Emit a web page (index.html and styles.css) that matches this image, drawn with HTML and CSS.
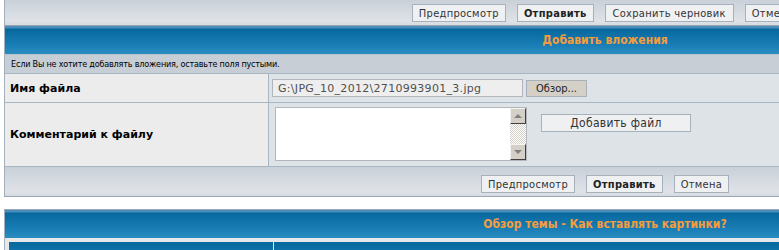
FILE: index.html
```html
<!DOCTYPE html>
<html lang="ru">
<head>
  <meta charset="UTF-8">
  <title>Добавить вложения</title>
  <link rel="stylesheet" href="styles.css">
</head>
<body>
  <div class="panel">
    <div class="bar bar-top">
      <button type="button" class="btn">Предпросмотр</button>
      <button type="button" class="btn btn-main">Отправить</button>
      <button type="button" class="btn btn-draft">Сохранить черновик</button>
      <button type="button" class="btn">Отмена</button>
    </div>
    <div class="cat-head">Добавить вложения</div>
    <div class="info">Если Вы не хотите добавлять вложения, оставьте поля пустыми.</div>
    <div class="row row-file">
      <div class="label">Имя файла</div>
      <div class="field">
        <input type="text" class="file-input" value="G:\JPG_10_2012\2710993901_3.jpg">
        <button type="button" class="browse">Обзор...</button>
      </div>
    </div>
    <div class="row row-comment">
      <div class="label">Комментарий к файлу</div>
      <div class="field">
        <div class="textbox">
          <textarea name="filecomment"></textarea>
          <div class="scroll">
            <span class="arrow arrow-up"></span>
            <span class="track"></span>
            <span class="arrow arrow-down"></span>
          </div>
        </div>
        <button type="button" class="btn btn-wide">Добавить файл</button>
      </div>
    </div>
    <div class="bar bar-bottom">
      <button type="button" class="btn">Предпросмотр</button>
      <button type="button" class="btn btn-main">Отправить</button>
      <button type="button" class="btn">Отмена</button>
    </div>
  </div>

  <div class="panel panel-review">
    <div class="cat-head">Обзор темы - Как вставлять картинки?</div>
    <div class="review-grid">
      <div class="review-cell review-left"></div>
      <div class="review-cell"></div>
    </div>
  </div>
</body>
</html>
```

FILE: styles.css
```css
html, body {
  overflow: hidden;
}
body {
  margin: 0;
  padding: 0 0 0 4px;
  font-family: Tahoma, "DejaVu Sans Condensed", "DejaVu Sans", sans-serif;
  font-size: 11px;
  color: #000;
  background: #fff;
}
.panel {
  width: 1200px;
  border-left: 1px solid #a3b0bb;
  border-right: 1px solid #a3b0bb;
}
.bar {
  display: flex;
  justify-content: center;
  gap: 11px;
  background: linear-gradient(#c9d0d8, #dfe3e8 85%, #d6dbe1);
  border-bottom: 1px solid #9aa7b3;
}
.bar-top {
  height: 26px;
  padding-top: 4px;
  padding-left: 2px;
  box-sizing: border-box;
}
.bar-bottom {
  height: 30px;
  padding-top: 8px;
  box-sizing: border-box;
}
.btn {
  height: 18px;
  padding: 0 6px;
  font-family: inherit;
  font-size: 11px;
  letter-spacing: 0.3px;
  color: #333;
  background: #eef0f2;
  border: 1px solid #a7b1bb;
  border-radius: 0;
}
.btn-main {
  font-weight: bold;
  color: #222;
}
.btn-draft {
  padding: 0 7px;
}
.cat-head {
  height: 28px;
  line-height: 28px;
  text-align: center;
  font-size: 12px;
  font-weight: bold;
  color: #f59d3c;
  background: linear-gradient(#4a8dbb 0, #4a8dbb 2px, #07689d 3px, #1a7fb6 70%, #2b8dc0);
}
.info {
  height: 18px;
  line-height: 18px;
  padding-left: 6px;
  font-size: 9px;
  letter-spacing: -0.2px;
  background: #c7ced6;
  border-top: 1px solid #b8c2cb;
  border-bottom: 1px solid #a8b6c1;
}
.row {
  display: grid;
  grid-template-columns: 264px 1fr;
  border-bottom: 1px solid #a8b6c1;
}
.row-file {
  height: 28px;
}
.row-comment {
  height: 63px;
}
.label {
  display: flex;
  align-items: center;
  padding-left: 5px;
  font-family: "DejaVu Sans", sans-serif;
  font-weight: bold;
  background: #ececec;
  border-right: 1px solid #a8b6c1;
}
.field {
  display: flex;
  align-items: center;
  gap: 3px;
  padding-left: 3px;
  background: #dee3e7;
}
.file-input {
  width: 251px;
  height: 18px;
  box-sizing: border-box;
  padding: 0 5px;
  font-family: "DejaVu Sans", sans-serif;
  font-size: 11px;
  letter-spacing: 0.3px;
  color: #505050;
  background: #eeeeee;
  border: 1px solid #b0b6bc;
  outline: none;
}
.browse {
  height: 17px;
  padding: 0 9px;
  font-family: inherit;
  font-size: 11px;
  color: #222;
  background: #d4d0c8;
  border: 1px solid #a8b0b8;
}
.row-comment .field {
  align-items: flex-start;
  padding-left: 6px;
  padding-top: 4px;
  gap: 14px;
}
.textbox {
  display: flex;
  width: 252px;
  height: 54px;
  box-sizing: border-box;
  border: 1px solid #b0b6bc;
  background: #fff;
}
.textbox textarea {
  flex: 1;
  border: none;
  resize: none;
  outline: none;
  background: #fff;
}
.scroll {
  display: flex;
  flex-direction: column;
  width: 16px;
}
.track {
  flex: 1;
  background: repeating-conic-gradient(#ffffff 0 25%, #d4d0c8 0 50%) 0 0 / 2px 2px;
}
.arrow {
  height: 16px;
  box-sizing: border-box;
  background: #d4d0c8;
  border: 1px solid;
  border-color: #f4f3ee #404040 #404040 #f4f3ee;
  display: flex;
  align-items: center;
  justify-content: center;
}
.arrow::after {
  content: "";
  border-left: 4px solid transparent;
  border-right: 4px solid transparent;
}
.arrow-up::after {
  border-bottom: 4px solid #808080;
}
.arrow-down::after {
  border-top: 4px solid #808080;
}
.btn-wide {
  width: 150px;
  margin-top: 7px;
  font-size: 12px;
}
.panel-review {
  margin-top: 12px;
  border-top: 1px solid #9aa7b3;
}
.review-grid {
  display: grid;
  grid-template-columns: 264px 1fr;
  gap: 1px;
  padding: 4px 4px 0;
  background: #e6e8ea;
}
.review-cell {
  height: 20px;
  background: linear-gradient(#07689d, #1a7fb6);
}
```
